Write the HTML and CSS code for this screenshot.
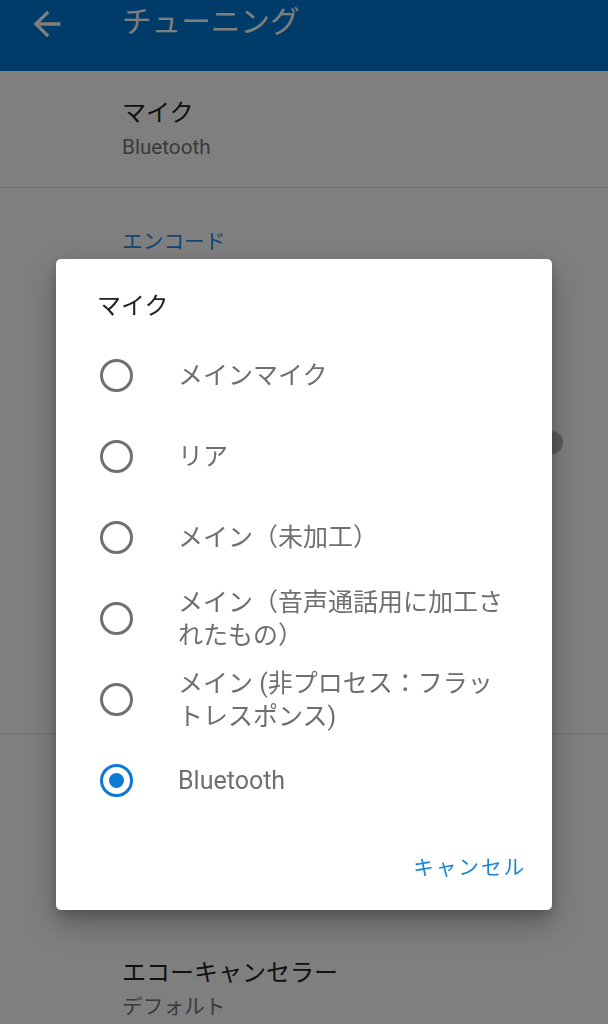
FILE: index.html
```html
<!DOCTYPE html>
<html lang="ja">
<head>
<meta charset="utf-8">
<title>チューニング</title>
<link rel="stylesheet" href="styles.css">
</head>
<body>
<div class="screen">
  <header class="appbar">
    <span class="nav-icon">
      <svg viewBox="0 0 24 24" width="40" height="40"><path d="M20 11H7.83l5.59-5.59L12 4l-8 8 8 8 1.41-1.41L7.83 13H20v-2z"/></svg>
    </span>
    <h1 class="appbar-title">チューニング</h1>
  </header>
  <main class="prefs">
    <div class="pref pref-first">
      <div class="pref-title">マイク</div>
      <div class="pref-summary">Bluetooth</div>
    </div>
    <div class="divider"></div>
    <div class="category">エンコード</div>
    <div class="pref-switch-row"><span class="switch-thumb"></span></div>
    <div class="divider"></div>
    <div class="pref pref-echo">
      <div class="pref-title">エコーキャンセラー</div>
      <div class="pref-summary">デフォルト</div>
    </div>
  </main>
</div>
<div class="scrim"></div>
<div class="dialog" role="dialog">
  <div class="dialog-title">マイク</div>
  <ul class="options">
    <li class="option"><span class="radio"></span><span class="option-label">メインマイク</span></li>
    <li class="option"><span class="radio"></span><span class="option-label">リア</span></li>
    <li class="option"><span class="radio"></span><span class="option-label">メイン（未加工）</span></li>
    <li class="option"><span class="radio"></span><span class="option-label">メイン（音声通話用に加工されたもの）</span></li>
    <li class="option"><span class="radio"></span><span class="option-label">メイン (非プロセス：フラットレスポンス)</span></li>
    <li class="option"><span class="radio checked"></span><span class="option-label">Bluetooth</span></li>
  </ul>
  <div class="actions">
    <button class="btn-text" type="button">キャンセル</button>
  </div>
</div>
</body>
</html>
```
FILE: styles.css
```css
html, body {
  margin: 0;
  padding: 0;
}
body {
  width: 608px;
  height: 1024px;
  overflow: hidden;
  background: #ffffff;
  font-family: Roboto, "Noto Sans CJK JP", sans-serif;
  position: relative;
}
.screen {
  width: 608px;
}
.appbar {
  height: 71px;
  background: #0079d5;
  display: flex;
  align-items: flex-start;
  color: #ffffff;
}
.nav-icon {
  display: block;
  width: 40px;
  height: 40px;
  margin: 4px 0 0 27px;
}
.nav-icon svg {
  display: block;
  fill: #ffffff;
}
.appbar-title {
  margin: 0 0 0 55px;
  font-size: 29.6px;
  line-height: 45px;
  font-weight: 400;
}
.prefs {
  display: flex;
  flex-direction: column;
}
.pref {
  padding-left: 122px;
}
.pref-first {
  padding-top: 25px;
  padding-bottom: 23px;
}
.pref-echo {
  padding-top: 222px;
}
.pref-title {
  font-size: 24px;
  line-height: 34px;
  color: #212121;
}
.pref-summary {
  font-size: 20.7px;
  line-height: 34px;
  color: #757575;
}
.divider {
  height: 1px;
  background: #e0e0e0;
}
.category {
  padding: 39px 0 0 122px;
  font-size: 20.7px;
  line-height: 30px;
  color: #1f8fe6;
}
.pref-switch-row {
  display: flex;
  justify-content: flex-end;
  align-items: center;
  height: 30px;
  padding: 170px 45px 276px 0;
}
.switch-thumb {
  width: 23px;
  height: 23px;
  border-radius: 50%;
  background: #b8b8b8;
}
.scrim {
  position: fixed;
  inset: 0;
  background: rgba(0, 0, 0, 0.5);
}
.dialog {
  position: absolute;
  left: 56px;
  top: 259px;
  width: 496px;
  box-sizing: border-box;
  padding: 30px 0 18px;
  background: #ffffff;
  border-radius: 5px;
  box-shadow: 0 14px 30px rgba(0, 0, 0, 0.28), 0 4px 12px rgba(0, 0, 0, 0.18);
}
.dialog-title {
  padding-left: 41px;
  font-size: 24px;
  line-height: 34px;
  color: #212121;
}
.options {
  list-style: none;
  margin: 12px 0 0;
  padding: 0;
}
.option {
  display: flex;
  align-items: center;
  height: 81px;
  padding: 0 42px 0 44px;
}
.radio {
  flex: none;
  width: 33px;
  height: 33px;
  box-sizing: border-box;
  border: 3px solid #707070;
  border-radius: 50%;
  display: grid;
  place-items: center;
}
.radio.checked {
  border-color: #0b7ad6;
}
.radio.checked::after {
  content: "";
  width: 15px;
  height: 15px;
  border-radius: 50%;
  background: #0b7ad6;
}
.option-label {
  flex: 1;
  margin-left: 45px;
  font-size: 25px;
  line-height: 33px;
  color: #6f6f6f;
}
.actions {
  display: flex;
  justify-content: flex-end;
  margin-top: 18px;
  padding-right: 14px;
}
.btn-text {
  height: 53px;
  padding: 0 12px;
  border: 0;
  background: none;
  font-family: Roboto, "Noto Sans CJK JP", sans-serif;
  font-size: 20.7px;
  letter-spacing: 1.85px;
  color: #1a84d6;
}
```
